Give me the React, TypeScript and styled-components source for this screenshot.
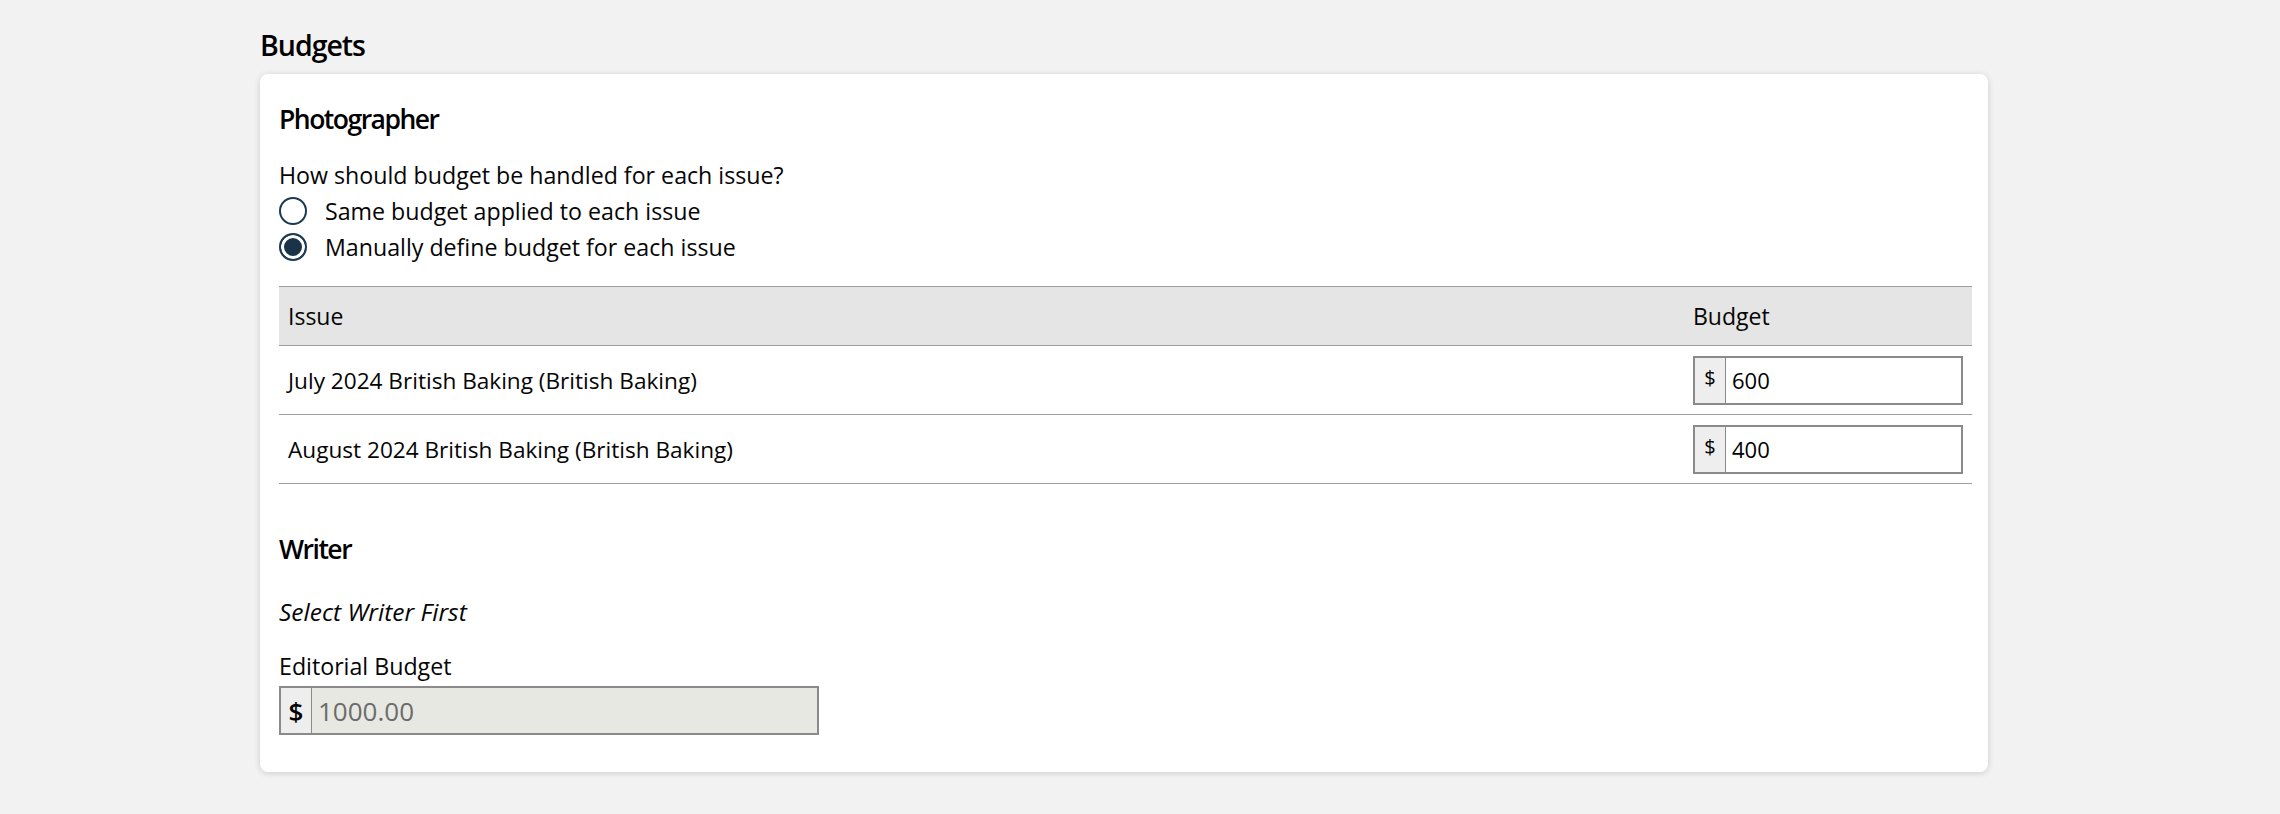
import React from 'react';
import styled, { createGlobalStyle } from 'styled-components';

const GlobalStyle = createGlobalStyle`
  html, body {
    margin: 0;
    padding: 0;
    background: #f2f2f2;
    font-family: "Open Sans", "Noto Sans", "Liberation Sans", sans-serif;
    color: #050505;
  }
`;

const Page = styled.div`
  padding: 28px 0 40px 260px;
`;

const PageTitle = styled.h2`
  margin: 0 0 12px;
  font-size: 28.5px;
  line-height: 34px;
  font-weight: 600;
  letter-spacing: -1px;
  color: #000;
`;

const Card = styled.div`
  width: 1728px;
  box-sizing: border-box;
  background: #fff;
  border-radius: 8px;
  box-shadow: 0 1px 6px rgba(0, 0, 0, 0.16);
  padding: 29px 16px 37px 19px;
`;

const SectionTitle = styled.h3<{ $gap?: number }>`
  margin: ${p => p.$gap ?? 0}px 0 0;
  font-size: 26.5px;
  line-height: 32px;
  font-weight: 600;
  letter-spacing: -1.5px;
  color: #000;
`;

const Question = styled.div`
  margin-top: 23px;
  font-size: 23.2px;
  line-height: 35px;
`;

const RadioRow = styled.label`
  display: flex;
  align-items: center;
  gap: 18px;
  height: 36px;
  font-size: 23.2px;
  cursor: pointer;
`;

const Radio = styled.input`
  appearance: none;
  margin: 0;
  width: 28px;
  height: 28px;
  border-radius: 50%;
  border: 2px solid #1c3a52;
  box-sizing: border-box;
  background: #fff;
  flex-shrink: 0;

  &:checked {
    background: #1a3348;
    box-shadow: inset 0 0 0 3px #fff;
  }
`;

const Table = styled.table`
  margin-top: 21px;
  width: 100%;
  border-collapse: collapse;
  border-top: 1px solid #9e9e9e;

  th {
    background: #e5e5e5;
    text-align: left;
    font-weight: 400;
    font-size: 23px;
    height: 58px;
    padding: 0 9px;
    border-bottom: 1px solid #9e9e9e;
  }

  td {
    font-size: 22.6px;
    height: 68px;
    padding: 0 9px;
    border-bottom: 1px solid #9e9e9e;
  }

  .budget {
    width: 270px;
    padding: 0 9px 0 8px;
  }
`;

const InputGroup = styled.div<{ $width: number; $disabled?: boolean }>`
  display: flex;
  width: ${p => p.$width}px;
  height: 49px;
  box-sizing: border-box;
  border: 2px solid #8a8a8a;
  background: ${p => (p.$disabled ? '#e8e8e3' : '#fff')};
`;

const Addon = styled.span<{ $big?: boolean }>`
  display: flex;
  align-items: center;
  justify-content: center;
  width: 31px;
  flex-shrink: 0;
  background: #eeeeee;
  border-right: 1px solid #8a8a8a;
  font-size: ${p => (p.$big ? 26 : 20)}px;
  font-weight: ${p => (p.$big ? 600 : 500)};
  padding-bottom: ${p => (p.$big ? 0 : 6)}px;
  box-sizing: border-box;
  color: #000;
`;

const Field = styled.input<{ $big?: boolean }>`
  flex: 1;
  min-width: 0;
  border: none;
  outline: none;
  background: transparent;
  padding: 0 6px;
  font-family: inherit;
  font-size: ${p => (p.$big ? 26 : 22)}px;
  color: #000;

  &:disabled {
    color: #6b6b6b;
  }
`;

const Note = styled.div`
  margin-top: 30px;
  font-size: 24.5px;
  line-height: 34px;
  font-style: italic;
`;

const Label = styled.div`
  margin-top: 20px;
  font-size: 23.2px;
  line-height: 34px;
  margin-bottom: 3px;
`;

const issues = [
  { name: 'July 2024 British Baking (British Baking)', budget: '600' },
  { name: 'August 2024 British Baking (British Baking)', budget: '400' },
];

const App = () => {
  return (
    <>
      <GlobalStyle />
      <Page>
        <PageTitle>Budgets</PageTitle>
        <Card>
          <SectionTitle>Photographer</SectionTitle>
          <Question>How should budget be handled for each issue?</Question>
          <RadioRow>
            <Radio type="radio" name="mode" />
            Same budget applied to each issue
          </RadioRow>
          <RadioRow>
            <Radio type="radio" name="mode" defaultChecked />
            Manually define budget for each issue
          </RadioRow>
          <Table>
            <thead>
              <tr>
                <th>Issue</th>
                <th className="budget">Budget</th>
              </tr>
            </thead>
            <tbody>
              {issues.map(issue => (
                <tr key={issue.name}>
                  <td>{issue.name}</td>
                  <td className="budget">
                    <InputGroup $width={270}>
                      <Addon>$</Addon>
                      <Field defaultValue={issue.budget} />
                    </InputGroup>
                  </td>
                </tr>
              ))}
            </tbody>
          </Table>

          <SectionTitle $gap={49}>Writer</SectionTitle>
          <Note>Select Writer First</Note>
          <Label>Editorial Budget</Label>
          <InputGroup $width={540} $disabled>
            <Addon $big>$</Addon>
            <Field $big disabled defaultValue="1000.00" />
          </InputGroup>
        </Card>
      </Page>
    </>
  );
};

export default App;
